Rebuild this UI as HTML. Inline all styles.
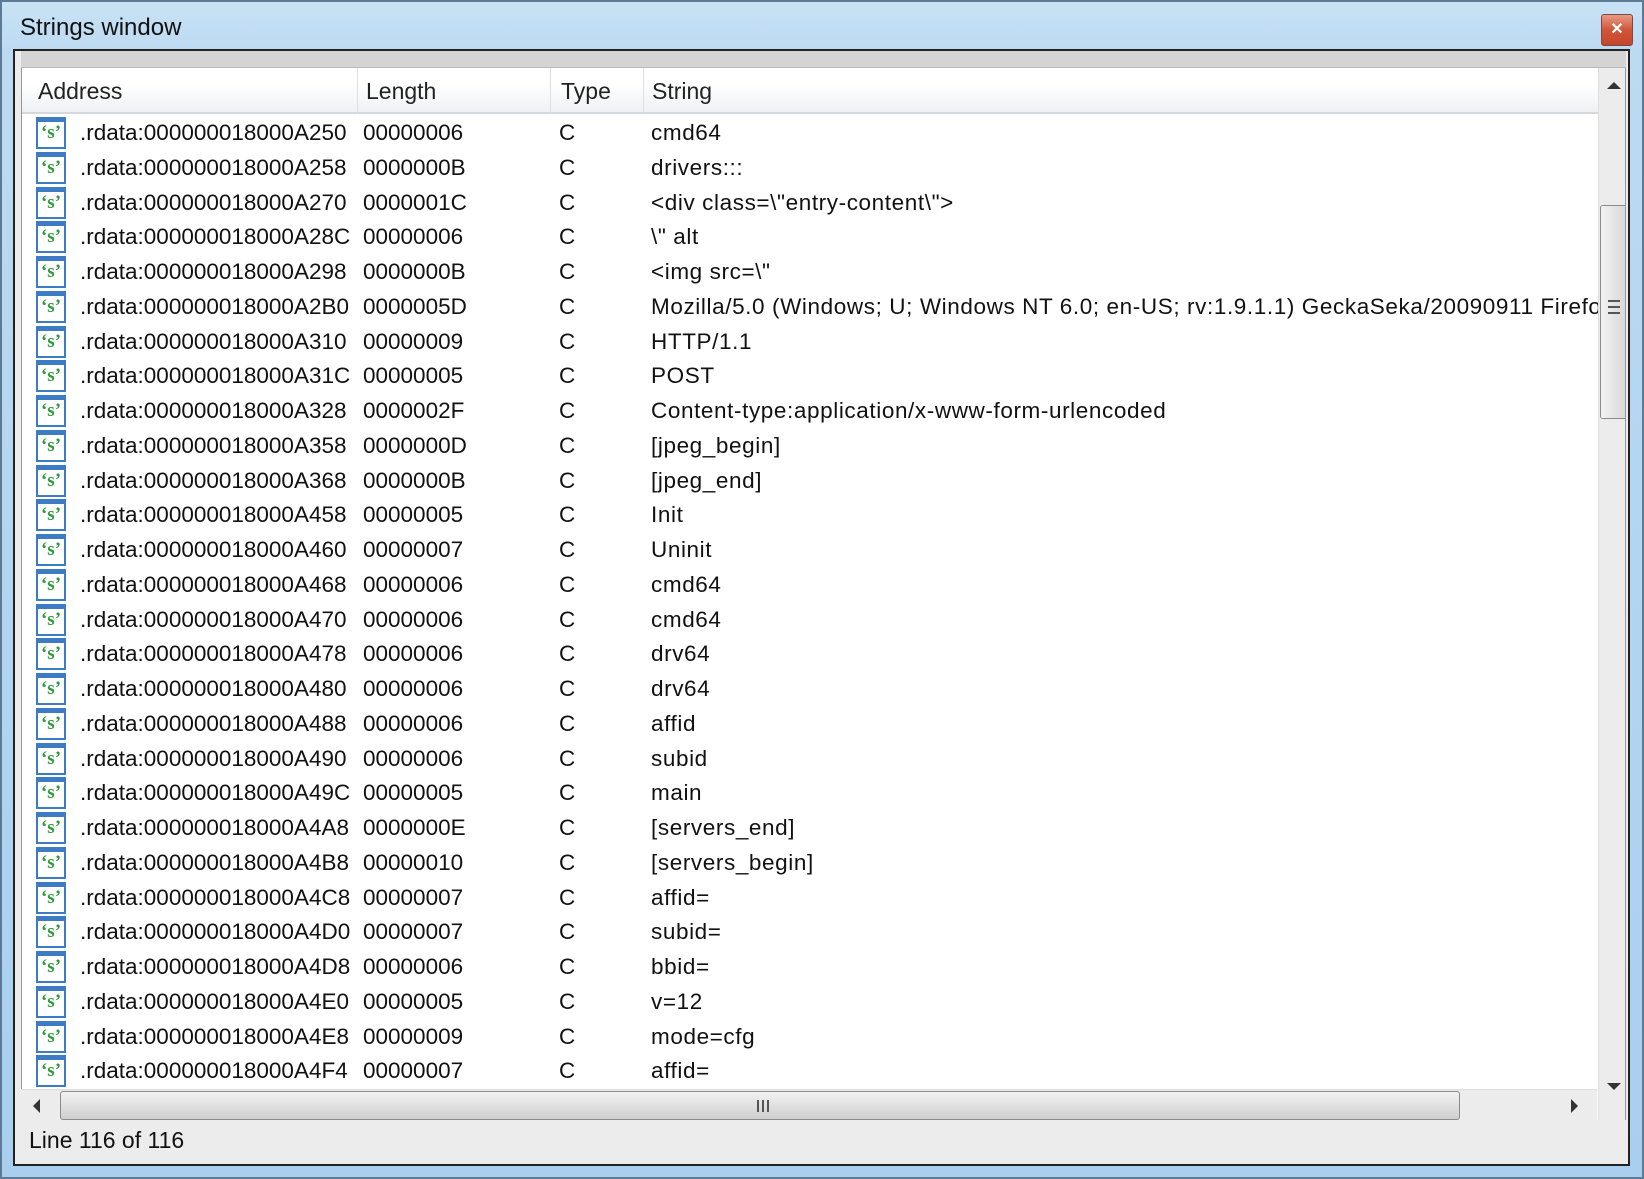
<!DOCTYPE html>
<html><head><meta charset="utf-8"><style>
*{margin:0;padding:0;box-sizing:border-box}
body{width:1644px;height:1179px;overflow:hidden;background:#fff;font-family:"Liberation Sans",Arial,sans-serif;position:relative}
#win{position:absolute;left:0;top:0;width:1644px;height:1179px;background:linear-gradient(180deg,#c9e2f5 0,#bcdaf2 50px,#a9cfee 100%);border:2px solid #5c7a94}
#title{position:absolute;left:18px;top:12px;font-size:24px;color:#111}
#close{position:absolute;left:1599px;top:12px;width:32px;height:32px;border:1px solid #7a4a40;border-radius:3px;background:linear-gradient(180deg,#e89a85,#d0553a 50%,#c7452a);color:#fff;font-weight:bold;font-size:16px;text-align:center;line-height:30px}
#frame{position:absolute;left:13px;top:49px;width:1617px;height:1117px;border:2px solid #222;background:#ececec}
#gbar{position:absolute;left:6px;top:0;width:1605px;height:17px;background:#d4d4d4;border-bottom:1px solid #b8b8b8}
#list{position:absolute;left:6px;top:17px;width:1605px;height:1052px;background:#fff;border-left:1px solid #999;border-right:1px solid #999;overflow:hidden}
#hdr{position:absolute;left:0;top:0;width:1576px;height:46px;background:linear-gradient(180deg,#fff 0,#fff 40%,#eef0f3 100%);border-bottom:2px solid #d5d8dc;font-size:23px;color:#222}
.hc{position:absolute;top:10px}
.sep{position:absolute;top:0;width:1px;height:46px;background:#dcdfe3}
.row{position:absolute;left:0;width:1576px;height:35px;font-size:22.5px;color:#111;white-space:nowrap;overflow:hidden}
.row span{position:absolute;top:4px}
.row span.s{letter-spacing:0.6px}
.ic{position:absolute;left:14px;top:1px;width:30px;height:32px;border:2px solid #3d7cc4;border-top:5px solid #3d7cc4;background:#fff;color:#2e9a3a;font:bold 19px "Liberation Serif",serif;text-align:center;line-height:22px}
#vs{position:absolute;left:1576px;top:0;width:29px;height:1052px;background:#ececec;border-left:1px solid #ddd}
#vthumb{position:absolute;left:1578px;top:137px;width:28px;height:214px;border:1px solid #8b8b8b;border-radius:3px;background:linear-gradient(90deg,#f2f2f2,#d6d6d6)}
#hs{position:absolute;left:6px;top:1038px;width:1576px;height:32px;background:#ececec;border-top:1px solid #ddd}
#hthumb{position:absolute;left:45px;top:1040px;width:1400px;height:29px;border:1px solid #8b8b8b;border-radius:3px;background:linear-gradient(180deg,#f2f2f2,#cfcfcf)}
#status{position:absolute;left:14px;top:1076px;font-size:23px;color:#111}
</style></head><body>
<div id="win">
<div id="title">Strings window</div>
<div id="close">✕</div>
</div>
<div id="frame">
<div id="gbar"></div>
<div id="list">
<div id="hdr">
<span class="hc" style="left:16px">Address</span>
<div class="sep" style="left:335px"></div>
<span class="hc" style="left:344px">Length</span>
<div class="sep" style="left:528px"></div>
<span class="hc" style="left:539px">Type</span>
<div class="sep" style="left:621px"></div>
<span class="hc" style="left:630px">String</span>
</div>
<div id="rows"></div>
<div id="vs"><div style="position:absolute;left:8px;top:14px;width:0;height:0;border-left:7px solid transparent;border-right:7px solid transparent;border-bottom:7px solid #333"></div><div style="position:absolute;left:8px;top:1015px;width:0;height:0;border-left:7px solid transparent;border-right:7px solid transparent;border-top:7px solid #333"></div></div>
<div id="vthumb"><div style="position:absolute;left:7px;top:94px;width:12px;height:14px;border-top:2px solid #555;border-bottom:2px solid #555"><div style="margin-top:4px;height:2px;background:#555"></div></div></div>
</div>
<div id="hs"><div style="position:absolute;left:12px;top:9px;border-top:7px solid transparent;border-bottom:7px solid transparent;border-right:7px solid #333"></div><div style="position:absolute;left:1550px;top:9px;border-top:7px solid transparent;border-bottom:7px solid transparent;border-left:7px solid #333"></div></div>
<div id="hthumb"><div style="position:absolute;left:696px;top:8px;width:12px;height:12px;border-left:2px solid #555;border-right:2px solid #555"><div style="margin-left:3px;width:2px;height:12px;background:#555"></div></div></div>
<div id="status">Line 116 of 116</div>
</div>
<script>
var d=[["A250","00000006","cmd64"],["A258","0000000B","drivers:::"],["A270","0000001C","<div class=\\\"entry-content\\\">"],["A28C","00000006","\\\" alt"],["A298","0000000B","<img src=\\\""],["A2B0","0000005D","Mozilla/5.0 (Windows; U; Windows NT 6.0; en-US; rv:1.9.1.1) GeckaSeka/20090911 Firefox/3.5.3"],["A310","00000009","HTTP/1.1"],["A31C","00000005","POST"],["A328","0000002F","Content-type:application/x-www-form-urlencoded"],["A358","0000000D","[jpeg_begin]"],["A368","0000000B","[jpeg_end]"],["A458","00000005","Init"],["A460","00000007","Uninit"],["A468","00000006","cmd64"],["A470","00000006","cmd64"],["A478","00000006","drv64"],["A480","00000006","drv64"],["A488","00000006","affid"],["A490","00000006","subid"],["A49C","00000005","main"],["A4A8","0000000E","[servers_end]"],["A4B8","00000010","[servers_begin]"],["A4C8","00000007","affid="],["A4D0","00000007","subid="],["A4D8","00000006","bbid="],["A4E0","00000005","v=12"],["A4E8","00000009","mode=cfg"],["A4F4","00000007","affid="]];
function esc(s){return s.replace(/&/g,"&amp;").replace(/</g,"&lt;").replace(/>/g,"&gt;")}
var h="";
for(var i=0;i<d.length;i++){var t=48+i*34.75;
h+='<div class="row" style="top:'+t+'px"><div class="ic">‘s’</div><span style="left:58px">.rdata:000000018000'+d[i][0]+'</span><span style="left:341px">'+d[i][1]+'</span><span style="left:537px">C</span><span class="s" style="left:629px">'+esc(d[i][2])+'</span></div>';}
document.getElementById("rows").innerHTML=h;
</script>
</body></html>
